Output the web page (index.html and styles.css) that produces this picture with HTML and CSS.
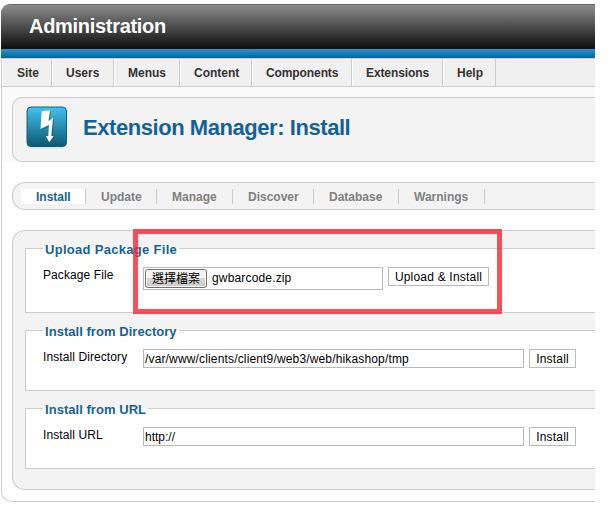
FILE: index.html
```html
<!DOCTYPE html>
<html lang="en">
<head>
<meta charset="utf-8">
<title>Administration</title>
<link rel="stylesheet" href="styles.css">
</head>
<body>
<div class="app">
  <header class="header"><h1><span>Administration</span></h1></header>
  <div class="stripe"></div>
  <div class="body">
    <nav class="menu">
      <a class="m-site">Site</a><a class="m-users">Users</a><a class="m-menus">Menus</a><a class="m-content">Content</a><a class="m-components">Components</a><a class="m-extensions">Extensions</a><a class="m-help">Help</a>
    </nav>
    <div class="title-band">
      <div class="title-box">
        <svg class="icon" width="44" height="46" viewBox="0 0 44 46">
          <defs>
            <linearGradient id="tile" x1="0" y1="0" x2="0" y2="1"><stop offset="0" stop-color="#45c1f0"/><stop offset="1" stop-color="#0b5870"/></linearGradient>
          </defs>
          <rect x="1" y="4.500" width="39" height="39" rx="4" fill="#e2e2e2"/>
          <rect x="1" y="2" width="39.500" height="39.500" rx="4" fill="url(#tile)" stroke="#10617b"/>
          <path d="M17 7 25 6.500 23.500 17 28 14 26.500 32 28.500 32 24.500 38 21 32 23 32 24 21 15.500 25Z" fill="#0b5870" opacity=".6"/>
          <path d="M15.700 6 24 5.500 22.500 16 27 13 25.300 31 27.500 31 23.500 37.300 19.700 31 22.300 31 23 20 14.500 24Z" fill="#fff"/>
        </svg>
        <h2>Extension Manager: Install</h2>
      </div>
    </div>
    <nav class="submenu">
      <a class="s-install">Install</a><a class="s-update">Update</a><a class="s-manage">Manage</a><a class="s-discover">Discover</a><a class="s-database">Database</a><a class="s-warnings">Warnings</a>
    </nav>
    <main class="panel">
      <section class="group upload">
        <h3><span>Upload Package File</span></h3>
        <div class="row">
          <span class="label">Package File</span>
          <span class="field file"><button class="choose">選擇檔案</button><span>gwbarcode.zip</span></span>
          <button class="action wide">Upload &amp; Install</button>
        </div>
      </section>
      <section class="group">
        <h3><span>Install from Directory</span></h3>
        <div class="row">
          <span class="label">Install Directory</span>
          <span class="field path"><span>/var/www/clients/client9/web3/web/hikashop/tmp</span></span>
          <button class="action">Install</button>
        </div>
      </section>
      <section class="group">
        <h3><span>Install from URL</span></h3>
        <div class="row">
          <span class="label">Install URL</span>
          <span class="field"><span>http://</span></span>
          <button class="action">Install</button>
        </div>
      </section>
    </main>
  </div>
  <div class="highlight"></div>
</div>
</body>
</html>
```
FILE: styles.css
```css
* { box-sizing: border-box; }
body { margin: 0; background: #fff; font: 12px/15px "Liberation Sans", Arial, "Noto Sans CJK TC", sans-serif; color: #000; }
h1, h2, h3 { margin: 0; }
button { margin: 0; padding: 0; font: inherit; color: #000; }
.app { position: relative; width: 594px; margin: 4px 0 0 1px; }
.header { height: 45px; border-top: 1px solid #6b6b6b; border-radius: 9px 0 0 0; background: linear-gradient(#8b8b8b, #0d0d0d); padding: 9px 0 0 28px; }
.header h1 { font-size: 20px; line-height: 24px; letter-spacing: -.3px; color: #fff; }
.stripe { height: 9px; background: linear-gradient(#2a92cb, #04669c); }
.body { height: 444px; border: 1px solid #ccc; border-right: 0; border-radius: 0 0 0 10px; }
.menu { display: flex; height: 28px; background: #f0f0f0; border-bottom: 1px solid #ccc; box-shadow: inset 0 1px #f8f8f8; }
.menu a { border-right: 1px solid #ccc; border-left: 1px solid #fff; padding: 7px 0 0 13px; font-weight: bold; color: #333; white-space: nowrap; }
.m-site { width: 50px; }
.m-users { width: 62px; }
.m-menus { width: 66px; }
.m-content { width: 72px; }
.m-components { width: 100px; letter-spacing: -.1px; }
.m-extensions { width: 91px; letter-spacing: -.1px; }
.m-help { width: 53px; }
.menu .m-site { padding-left: 14px; }
.title-band { height: 75px; padding: 10px 0 0 10px; background: #fafafa; }
.title-box { display: flex; height: 65px; border: 1px solid #ccc; border-right: 0; border-radius: 10px 0 0 10px; background: #f3f3f3; }
.icon { flex: none; margin: 7px 0 0 13px; }
.title-box h2 { margin: 16px 0 0 13px; font-size: 22px; line-height: 28px; letter-spacing: -.44px; color: #146295; white-space: nowrap; }
.submenu { display: flex; height: 28px; margin: 20px 0 0 10px; padding: 6px 0 0 8px; border: 1px solid #ccc; border-right: 0; border-radius: 13px 0 0 13px; background: #f3f3f3; }
.submenu a { height: 15px; border-right: 1px solid #ccc; padding-left: 15px; font-weight: bold; line-height: 17px; color: #808080; white-space: nowrap; }
.submenu .s-install { width: 65px; background: #fff; color: #146295; }
.s-update { width: 71px; }
.s-manage { width: 76px; }
.s-discover { width: 81px; }
.s-database { width: 85px; }
.s-warnings { width: 86px; }
.panel { height: 260px; margin: 20px 0 0 10px; padding: 17px 0 0 12px; border: 1px solid #ccc; border-right: 0; border-radius: 13px 0 0 13px; background: #f3f3f3; }
.group { height: 61px; margin-bottom: 17px; border: 1px solid #ccc; border-right: 0; background: #fff; }
.group.upload { height: 65px; }
.group h3 { display: table; height: 17px; margin: -8px 0 0 17px; padding: 0 2px; background: linear-gradient(#f3f3f3 0 7px, #fff 7px); font-size: 13px; line-height: 17px; letter-spacing: .04px; color: #146295; }
.group.upload h3 { letter-spacing: .3px; }
.row { display: flex; align-items: flex-start; margin: 9px 0 0 17px; }
.label { width: 100px; padding-top: 1px; letter-spacing: .09px; white-space: nowrap; }
.field { display: flex; align-items: center; width: 381px; height: 19px; padding: 1px 0 0 1px; border: 1px solid #bababa; background: #fff; white-space: nowrap; }
.field.file { width: 240px; height: 23px; padding-top: 0; letter-spacing: .16px; }
.field.path { letter-spacing: .155px; }
.choose { width: 62px; height: 19px; margin-right: 5px; border: 1px solid #707070; border-radius: 3px; background: linear-gradient(#f3f3f3 50%, #d7d7d7 50%, #ccc); box-shadow: inset 0 0 0 1px #fafafa; line-height: 16px; white-space: nowrap; }
.action { width: 47px; height: 19px; margin-left: 5px; padding-top: 1px; border: 1px solid #bababa; background: #fff; line-height: 16px; letter-spacing: .2px; }
.action.wide { width: 101px; }
.highlight { position: absolute; left: 132px; top: 225px; width: 369px; height: 85px; border: 5px solid rgba(241, 43, 55, .82); }
```
